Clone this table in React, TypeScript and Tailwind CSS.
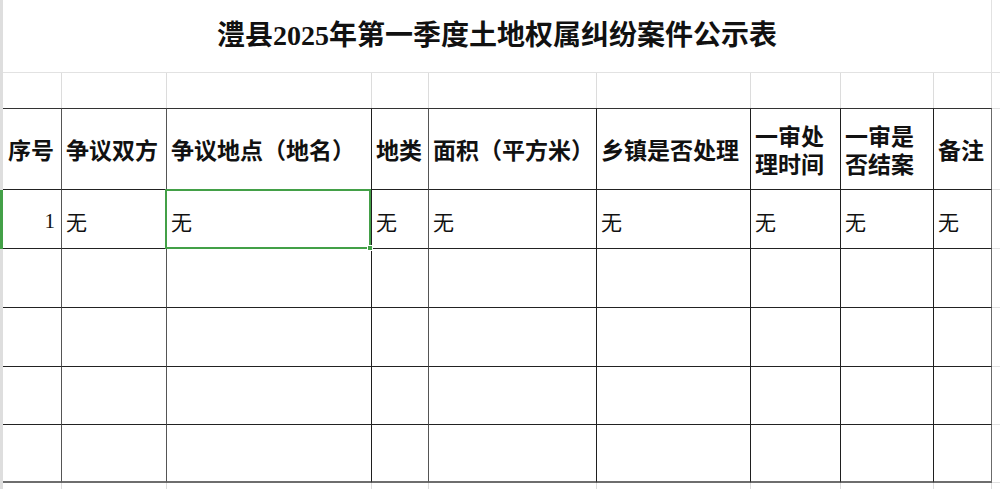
const cols = [
  { w: "w-[59px]", dark: "border-r-[#555]", light: "border-r-[#dcdcdc]" },
  { w: "w-[105px]", dark: "border-r-[#555]", light: "border-r-[#dcdcdc]" },
  { w: "w-[205px]", dark: "border-r-[#1f1f1f]", light: "border-r-[#dcdcdc]" },
  { w: "w-[57px]", dark: "border-r-[#555]", light: "border-r-[#dcdcdc]" },
  { w: "w-[168px]", dark: "border-r-[#1f1f1f]", light: "border-r-[#dcdcdc]" },
  { w: "w-[154px]", dark: "border-r-[#1f1f1f]", light: "border-r-[#dcdcdc]" },
  { w: "w-[90px]", dark: "border-r-[#1f1f1f]", light: "border-r-[#dcdcdc]" },
  { w: "w-[93px]", dark: "border-r-[#1f1f1f]", light: "border-r-[#dcdcdc]" },
  { w: "w-[58px]", dark: "border-r-[#6b6b6b]", light: "border-r-[#dcdcdc]" },
];

const headers: string[][] = [
  ["序号"],
  ["争议双方"],
  ["争议地点（地名）"],
  ["地类"],
  ["面积（平方米）"],
  ["乡镇是否处理"],
  ["一审处", "理时间"],
  ["一审是", "否结案"],
  ["备注"],
];

const cjk = { fontFamily: '"Noto Sans CJK SC", sans-serif' };
const serif = { fontFamily: '"Liberation Serif", "Noto Sans CJK SC", serif' };

function Strip({ green }: { green?: boolean }) {
  return <div className={`w-[3px] shrink-0 ${green ? "bg-[#43a047]" : "bg-[#dedede]"}`} />;
}

export default function App() {
  const emptyRows = [59, 59, 58, 58];

  return (
    <div className="w-[1000px] h-[489px] bg-white overflow-hidden flex flex-col">
      {/* title row, merged across the table */}
      <div className="flex h-[73px] shrink-0">
        <Strip />
        <div
          className="w-[989px] shrink-0 flex items-center justify-center border-r border-b border-[#e2e2e2] text-[28px] font-bold text-[#111]"
          style={serif}
        >
          澧县2025年第一季度土地权属纠纷案件公示表
        </div>
        <div className="flex-1 border-b border-[#e2e2e2]" />
      </div>

      {/* blank row */}
      <div className="flex h-[35px] shrink-0">
        <Strip />
        {cols.map((c, i) => (
          <div key={i} className={`${c.w} shrink-0 border-r ${c.light}`} />
        ))}
        <div className="flex-1" />
      </div>

      {/* header row */}
      <div className="flex h-[82px] shrink-0">
        <Strip />
        {cols.map((c, i) => (
          <div
            key={i}
            className={`${c.w} shrink-0 border-t border-b border-r border-t-[#333] border-b-[#222] ${c.dark} flex flex-col justify-center ${i === 0 ? "pl-[5px]" : "pl-1"} text-[23px] leading-[28px] font-bold text-[#111] whitespace-nowrap`}
            style={cjk}
          >
            {headers[i].map((l) => (
              <span key={l} className="block h-[28px]">{l}</span>
            ))}
          </div>
        ))}
        <div className="flex-1 border-t border-b border-[#e2e2e2]" />
      </div>

      {/* data row */}
      <div className="flex h-[59px] shrink-0">
        <Strip green />
        {cols.map((c, i) => (
          <div
            key={i}
            className={`${c.w} shrink-0 border-b border-r border-b-[#222] ${c.dark} flex items-center pt-[6px] text-[21px] text-[#111] ${i === 0 ? "justify-end pr-[6px]" : "pl-1"} ${i === 2 ? "relative" : ""}`}
            style={i === 0 ? serif : cjk}
          >
            {i === 0 ? "1" : "无"}
            {i === 2 && (
              <div className="absolute -top-px -left-[2px] right-0 -bottom-px border-2 border-[#43a047]">
                <div className="absolute -right-[4px] -bottom-[4px] w-[6px] h-[6px] bg-[#43a047] border border-white" />
              </div>
            )}
          </div>
        ))}
        <div className="flex-1 border-b border-[#e2e2e2]" />
      </div>

      {/* empty rows */}
      {emptyRows.map((h, r) => (
        <div key={r} className={`flex shrink-0 ${h === 59 ? "h-[59px]" : "h-[58px]"}`}>
          <Strip />
          {cols.map((c, i) => (
            <div
              key={i}
              className={`${c.w} shrink-0 border-r ${c.dark} ${r === emptyRows.length - 1 ? "border-b-2 border-b-[#6e6e6e]" : "border-b border-b-[#222]"}`}
            />
          ))}
          <div className="flex-1 border-b border-[#e2e2e2]" />
        </div>
      ))}

      {/* partial row below */}
      <div className="flex flex-1">
        <Strip />
        {cols.map((c, i) => (
          <div key={i} className={`${c.w} shrink-0 border-r ${c.light}`} />
        ))}
        <div className="flex-1" />
      </div>
    </div>
  );
}
